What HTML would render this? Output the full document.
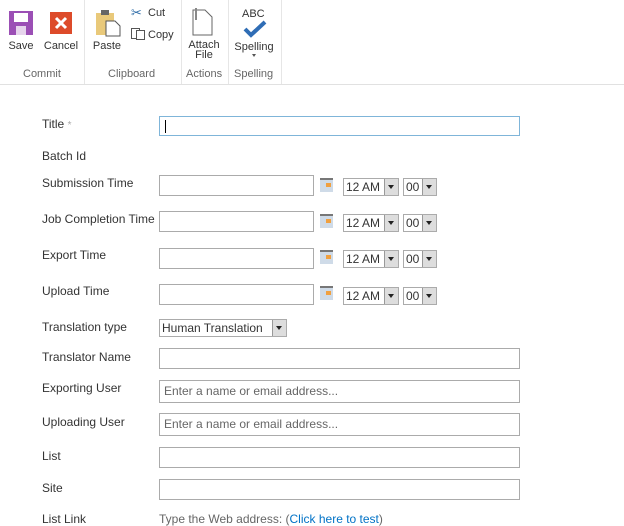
<!DOCTYPE html>
<html><head><style>
body{margin:0;width:624px;height:525px;background:#fff;font-family:"Liberation Sans",sans-serif;font-size:12px;color:#444;position:relative;overflow:hidden}
.a{position:absolute}
.sep{position:absolute;top:0;width:1px;height:84px;background:#e6e6e6}
.gl{position:absolute;top:68px;font-size:11px;color:#666}
.bl{position:absolute;font-size:11px;color:#333;text-align:center}
.lbl{position:absolute;left:42px;font-size:12px;color:#333}
.in{position:absolute;border:1px solid #ababab;background:#fff;box-sizing:border-box}
.sel{position:absolute;border:1px solid #ababab;box-sizing:border-box;height:18px;font-size:12px;color:#333;padding-left:2px;line-height:16px}
.sel i{position:absolute;right:0;top:0;width:13px;height:16px;background:#ddd;border-left:1px solid #999}
.sel i:after{content:"";position:absolute;left:3px;top:6px;border:3.5px solid transparent;border-top:4px solid #222}
.cal{position:absolute;width:13px;height:12px;background:#cfdbe8;border-top:2px solid #777}
.cal:after{content:"";position:absolute;right:2px;top:3px;width:5px;height:4px;background:#f0a040}
.ph{color:#666;font-size:12px;padding-left:4px;line-height:20px}
</style></head><body>
<div class="a" style="left:0;top:84px;width:624px;height:1px;background:#e1e1e1"></div>
<div class="sep" style="left:84px"></div><div class="sep" style="left:181px"></div><div class="sep" style="left:228px"></div><div class="sep" style="left:281px"></div>
<!-- Save -->
<svg class="a" style="left:9px;top:11px" width="24" height="24"><rect width="24" height="24" fill="#9b4fb5"/><rect x="5" y="2" width="14" height="9" fill="#fff"/><rect x="7" y="15" width="10" height="9" fill="#e6d4ec"/></svg>
<div class="bl" style="left:4px;top:40px;width:34px">Save</div>
<svg class="a" style="left:50px;top:12px" width="22" height="22"><rect width="22" height="22" fill="#dd4b2a"/><path d="M6 6L16 16M16 6L6 16" stroke="#fff" stroke-width="3"/></svg>
<div class="bl" style="left:42px;top:40px;width:38px">Cancel</div>
<!-- Paste -->
<svg class="a" style="left:95px;top:9px" width="28" height="28"><rect x="1" y="4" width="18" height="22" fill="#e9c97a"/><rect x="6" y="1" width="8" height="5" fill="#666"/><path d="M11 12h9l5 5v10h-14z" fill="#fff" stroke="#555"/></svg>
<div class="bl" style="left:90px;top:40px;width:34px">Paste</div>
<div class="a" style="left:131px;top:5px;font-size:13px;color:#2f6da8">✂</div>
<div class="a" style="left:148px;top:7px;font-size:11px;color:#333">Cut</div>
<svg class="a" style="left:131px;top:28px" width="14" height="12"><rect x="0.5" y="0.5" width="8" height="10" fill="#fff" stroke="#555"/><rect x="5.5" y="2.5" width="8" height="9" fill="#fff" stroke="#555"/></svg>
<div class="a" style="left:148px;top:29px;font-size:11px;color:#333">Copy</div>
<svg class="a" style="left:190px;top:7px" width="24" height="30"><path d="M3 3h12l7 7v18H3z" fill="#fff" stroke="#666"/><path d="M6 1v12" stroke="#888" stroke-width="2"/></svg>
<div class="bl" style="left:185px;top:40px;width:38px;line-height:10px">Attach<br>File</div>
<div class="a" style="left:242px;top:8px;font-size:11px;color:#333">ABC</div>
<svg class="a" style="left:243px;top:20px" width="24" height="18"><path d="M2 9l6 6L22 2" stroke="#2f6db5" stroke-width="4" fill="none"/></svg>
<div class="bl" style="left:232px;top:41px;width:44px">Spelling</div>
<div class="a" style="left:252px;top:54px;border:2px solid transparent;border-top:3px solid #555"></div>
<div class="gl" style="left:23px">Commit</div><div class="gl" style="left:108px">Clipboard</div><div class="gl" style="left:186px">Actions</div><div class="gl" style="left:234px">Spelling</div>

<div class="lbl" style="top:117px">Title <span style="color:#aaa;font-size:10px">*</span></div>
<div class="in" style="left:159px;top:116px;width:361px;height:20px;border-color:#7fb5d9"><div class="a" style="left:5px;top:3px;width:1px;height:13px;background:#000"></div></div>
<div class="lbl" style="top:149px">Batch Id</div>
<div class="lbl" style="top:176px">Submission Time</div>
<div class="lbl" style="top:212px">Job Completion Time</div>
<div class="lbl" style="top:248px">Export Time</div>
<div class="lbl" style="top:284px">Upload Time</div>
<div class="in" style="left:159px;top:175px;width:155px;height:21px"></div>
<div class="in" style="left:159px;top:211px;width:155px;height:21px"></div>
<div class="in" style="left:159px;top:248px;width:155px;height:21px"></div>
<div class="in" style="left:159px;top:284px;width:155px;height:21px"></div>
<div class="cal" style="left:320px;top:178px"></div><div class="cal" style="left:320px;top:214px"></div><div class="cal" style="left:320px;top:250px"></div><div class="cal" style="left:320px;top:286px"></div>
<div class="sel" style="left:343px;top:178px;width:56px">12 AM<i></i></div><div class="sel" style="left:403px;top:178px;width:34px">00<i></i></div>
<div class="sel" style="left:343px;top:214px;width:56px">12 AM<i></i></div><div class="sel" style="left:403px;top:214px;width:34px">00<i></i></div>
<div class="sel" style="left:343px;top:250px;width:56px">12 AM<i></i></div><div class="sel" style="left:403px;top:250px;width:34px">00<i></i></div>
<div class="sel" style="left:343px;top:287px;width:56px">12 AM<i></i></div><div class="sel" style="left:403px;top:287px;width:34px">00<i></i></div>
<div class="lbl" style="top:320px">Translation type</div>
<div class="sel" style="left:159px;top:319px;width:128px">Human Translation<i></i></div>
<div class="lbl" style="top:350px">Translator Name</div>
<div class="in" style="left:159px;top:348px;width:361px;height:21px"></div>
<div class="lbl" style="top:381px">Exporting User</div>
<div class="in ph" style="left:159px;top:380px;width:361px;height:23px">Enter a name or email address...</div>
<div class="lbl" style="top:415px">Uploading User</div>
<div class="in ph" style="left:159px;top:413px;width:361px;height:23px">Enter a name or email address...</div>
<div class="lbl" style="top:449px">List</div>
<div class="in" style="left:159px;top:447px;width:361px;height:21px"></div>
<div class="lbl" style="top:481px">Site</div>
<div class="in" style="left:159px;top:479px;width:361px;height:21px"></div>
<div class="lbl" style="top:512px">List Link</div>
<div class="a" style="left:159px;top:512px;color:#666">Type the Web address: (<span style="color:#0072c6">Click here to test</span>)</div>
</body></html>
